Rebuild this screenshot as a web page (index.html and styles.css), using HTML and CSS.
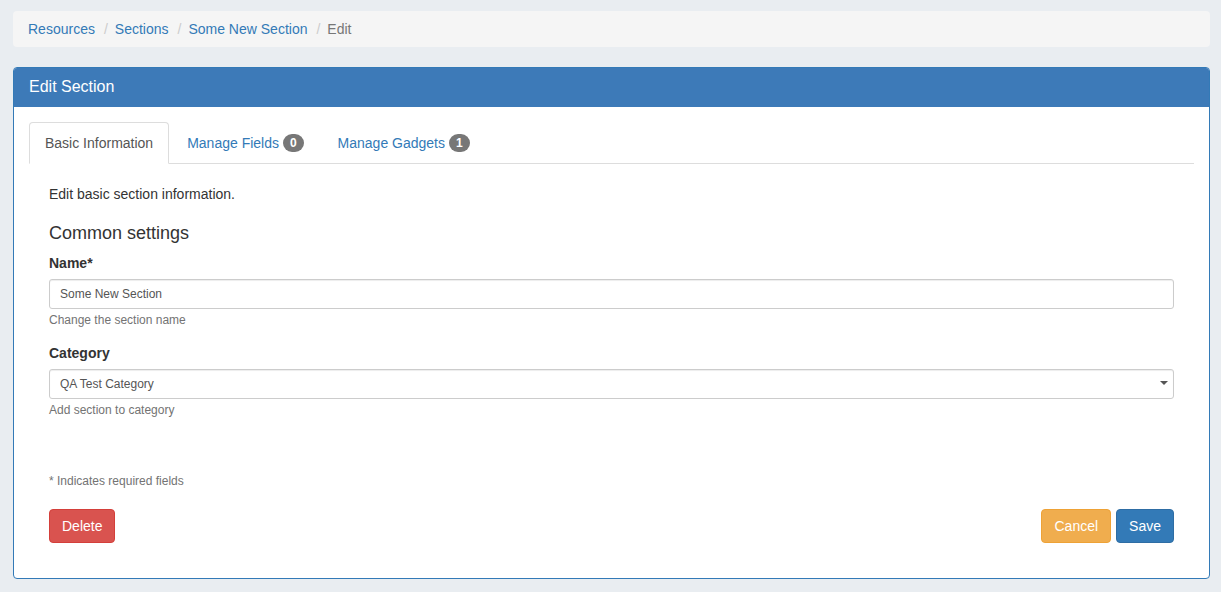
FILE: index.html
```html
<!DOCTYPE html>
<html>
<head>
<meta charset="utf-8">
<link rel="stylesheet" href="styles.css">
</head>
<body>
<div class="page">
  <ol class="breadcrumb">
    <li><a href="#">Resources</a></li>
    <li><a href="#">Sections</a></li>
    <li><a href="#">Some New Section</a></li>
    <li class="active">Edit</li>
  </ol>
  <div class="panel">
    <div class="panel-heading">Edit Section</div>
    <div class="panel-body">
      <ul class="nav-tabs">
        <li class="active"><a href="#">Basic Information</a></li>
        <li><a href="#">Manage Fields <span class="badge">0</span></a></li>
        <li><a href="#">Manage Gadgets <span class="badge">1</span></a></li>
      </ul>
      <div class="tab-content">
        <p class="intro">Edit basic section information.</p>
        <h4 class="subhead">Common settings</h4>
        <div class="form-group">
          <label class="label">Name*</label>
          <input class="form-control" type="text" value="Some New Section">
          <span class="help-block">Change the section name</span>
        </div>
        <div class="form-group">
          <label class="label">Category</label>
          <div class="select-wrap">
            <select class="form-control select"><option>QA Test Category</option></select>
            <span class="caret"></span>
          </div>
          <span class="help-block">Add section to category</span>
        </div>
        <p class="note">* Indicates required fields</p>
        <div class="actions">
          <button class="btn btn-danger">Delete</button>
          <div class="right">
            <button class="btn btn-warning">Cancel</button>
            <button class="btn btn-primary">Save</button>
          </div>
        </div>
      </div>
    </div>
  </div>
</div>
</body>
</html>
```
FILE: styles.css
```css
* { box-sizing: border-box; }
html, body { margin: 0; padding: 0; }
body {
  background: #e9edf1;
  font-family: "Liberation Sans", Arial, sans-serif;
  font-size: 14px;
  line-height: 1.42857;
  color: #333;
}
a { color: #337ab7; text-decoration: none; }
.page { padding: 11px 11px 12px 13px; }
.breadcrumb {
  list-style: none;
  margin: 0 0 20px;
  padding: 9px 15px 7px;
  background: #f5f5f5;
  border-radius: 4px;
  display: flex;
}
.breadcrumb li + li::before {
  content: "/";
  color: #ccc;
  padding: 0 7px 0 9px;
}
.breadcrumb .active { color: #777; }
.panel {
  background: #fff;
  border: 1px solid #337ab7;
  border-radius: 4px;
}
.panel-heading {
  background: #3d7ab8;
  color: #fff;
  font-size: 16px;
  line-height: 19px;
  padding: 9px 15px 11px 15px;
  border-top-left-radius: 3px;
  border-top-right-radius: 3px;
}
.panel-body { padding: 15px; }
.nav-tabs {
  list-style: none;
  margin: 0;
  padding: 0;
  display: flex;
  border-bottom: 1px solid #ddd;
}
.nav-tabs li { margin-right: 2px; margin-bottom: -1px; }
.nav-tabs a {
  display: block;
  padding: 10px 15px;
  line-height: 20px;
  border: 1px solid transparent;
  border-radius: 4px 4px 0 0;
}
.nav-tabs .active a {
  color: #555;
  background: #fff;
  border-color: #ddd #ddd transparent;
}
.badge {
  display: inline-block;
  min-width: 10px;
  padding: 3px 7px;
  font-size: 12px;
  font-weight: bold;
  line-height: 1;
  color: #fff;
  text-align: center;
  background: #777;
  border-radius: 10px;
  vertical-align: 1px;
}
.tab-content { padding: 21px 20px 20px; }
.intro { margin: 0; }
.subhead {
  font-size: 18px;
  font-weight: 500;
  line-height: 1.1;
  margin: 19px 0 10px;
}
.form-group { margin-bottom: 15px; }
.label {
  display: block;
  font-weight: bold;
  margin-bottom: 5px;
}
.form-control {
  display: block;
  width: 100%;
  height: 30px;
  padding: 5px 10px;
  font-family: "Liberation Sans", Arial, sans-serif;
  font-size: 12px;
  line-height: 1.5;
  color: #555;
  background: #fff;
  border: 1px solid #ccc;
  border-radius: 3px;
  box-shadow: inset 0 1px 1px rgba(0,0,0,.075);
}
.select-wrap { position: relative; }
.select { appearance: none; -webkit-appearance: none; }
.caret {
  position: absolute;
  right: 6px;
  top: 12px;
  width: 0;
  height: 0;
  border-left: 4px solid transparent;
  border-right: 4px solid transparent;
  border-top: 4px solid #555;
}
.help-block {
  display: block;
  margin-top: 3px;
  font-size: 12px;
  color: #737373;
}
.note {
  margin: 54px 0 0;
  font-size: 12px;
  color: #737373;
}
.actions {
  margin-top: 19px;
  display: flex;
  justify-content: space-between;
}
.right { display: flex; gap: 5px; }
.btn {
  display: inline-block;
  padding: 6px 12px;
  font-family: "Liberation Sans", Arial, sans-serif;
  font-size: 14px;
  line-height: 20px;
  border: 1px solid transparent;
  border-radius: 4px;
  color: #fff;
}
.btn-danger { background: #d9534f; border-color: #d43f3a; }
.btn-warning { background: #f0ad4e; border-color: #eea236; }
.btn-primary { background: #337ab7; border-color: #2e6da4; }
```
